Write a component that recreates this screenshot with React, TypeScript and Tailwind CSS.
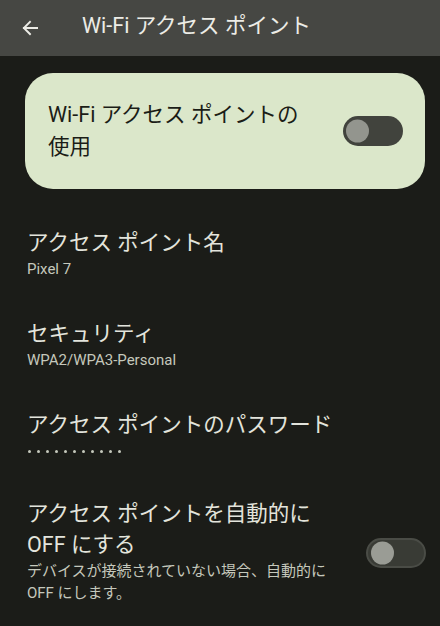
import React from "react";

const font = { fontFamily: 'Roboto, "Noto Sans CJK JP", sans-serif' };

function Toggle({ outlined }: { outlined?: boolean }) {
  return (
    <div
      className={
        "relative h-[30px] w-[60px] shrink-0 rounded-full " +
        (outlined ? "bg-[#393b35] border-2 border-[#4a4c46]" : "bg-[#41433d]")
      }
    >
      <div
        className={
          "absolute top-1/2 -translate-y-1/2 h-[23px] w-[23px] rounded-full " +
          (outlined ? "left-[3px] bg-[#9a9c95]" : "left-[3px] bg-[#93958e]")
        }
      />
    </div>
  );
}

function Item({ title, sub }: { title: string; sub: React.ReactNode }) {
  return (
    <div className="pt-[19px] pb-[20px] pl-[27px] pr-[14px]">
      <div className="text-[21.5px] leading-[30px] text-[#e3e4dc]">{title}</div>
      <div className="text-[15px] leading-[22px] text-[#c5c8bc]">{sub}</div>
    </div>
  );
}

export default function App() {
  return (
    <div className="h-[626px] w-[440px] overflow-hidden bg-[#1b1c18]" style={font}>
      <div className="flex h-[56px] items-center bg-[#464743]">
        <div className="ml-[22px] flex w-[16px] items-center">
          <svg width="17" height="16" viewBox="0 0 17 16" fill="none">
            <path d="M16 8H2M8.5 1.5L2 8l6.5 6.5" stroke="#ecece6" strokeWidth="2" strokeLinecap="square" />
          </svg>
        </div>
        <div className="ml-[44px] text-[21.5px] leading-[30px] text-[#ecece6] -mt-[4px]">
          Wi-Fi アクセス ポイント
        </div>
      </div>
      <div className="ml-[25px] mr-[15px] mt-[17px] flex h-[116px] items-center justify-between rounded-[28px] bg-[#dbe7ca] pl-[23px] pr-[22px]">
        <div className="w-[270px] text-[21.5px] leading-[32px] text-[#1b1d17]">
          Wi-Fi アクセス ポイントの使用
        </div>
        <Toggle />
      </div>
      <div className="mt-[20px]">
        <Item title="アクセス ポイント名" sub="Pixel 7" />
        <Item title="セキュリティ" sub="WPA2/WPA3-Personal" />
        <Item
          title="アクセス ポイントのパスワード"
          sub={
            <div className="flex h-[22px] items-center gap-[6px] pl-[1px]">
              {Array.from({ length: 11 }).map((_, i) => (
                <div key={i} className="h-[3px] w-[3px] rounded-full bg-[#c5c8bc]" />
              ))}
            </div>
          }
        />
        <div className="flex items-center pt-[16px] pl-[27px] pr-[14px]">
          <div className="w-[310px]">
            <div className="text-[21.5px] leading-[31px] text-[#e3e4dc]">
              アクセス ポイントを自動的に OFF にする
            </div>
            <div className="text-[15px] leading-[22px] text-[#c5c8bc]">
              デバイスが接続されていない場合、自動的に OFF にします。
            </div>
          </div>
          <div className="ml-auto mt-[4px]">
            <Toggle outlined />
          </div>
        </div>
      </div>
    </div>
  );
}
